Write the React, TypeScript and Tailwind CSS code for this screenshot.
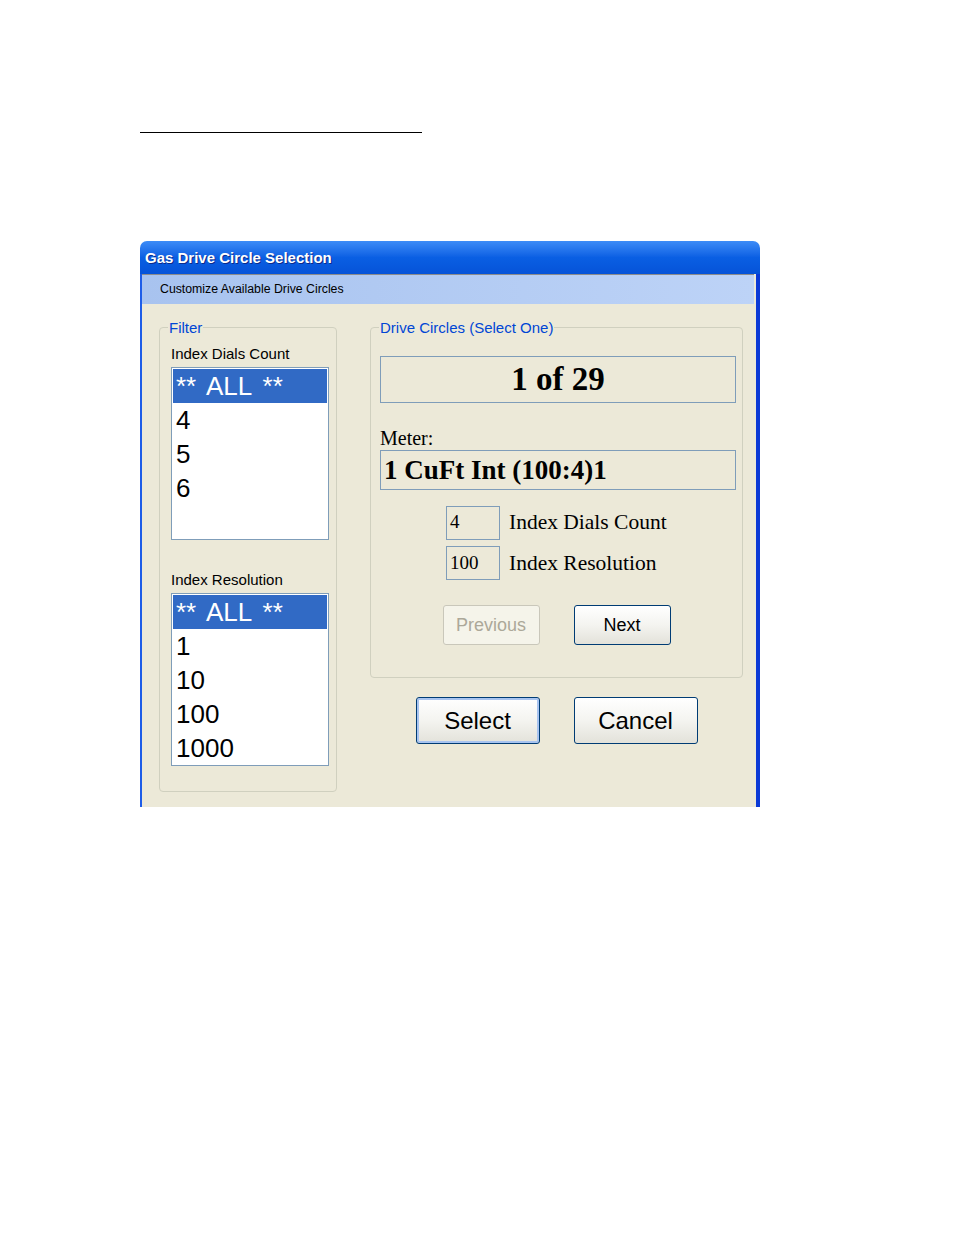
import React from "react";

const sans = "font-['Liberation_Sans',Arial,sans-serif]";
const serif = "font-['Liberation_Serif','Times_New_Roman',serif]";

type ListProps = {
  items: string[];
  selected: number;
};

function ListBox({ items, selected }: ListProps) {
  return (
    <div className="mt-[4px] h-[173px] w-[158px] border border-[#7f9db9] bg-white p-px">
      {items.map((item, i) => (
        <div
          key={item}
          className={`flex h-[34px] items-center px-[3px] text-[26px] leading-none ${
            i === selected ? "bg-[#316ac5] text-white [word-spacing:4px]" : "text-black"
          }`}
        >
          {item}
        </div>
      ))}
    </div>
  );
}

function GroupBox({
  title,
  className,
  children,
}: {
  title: string;
  className: string;
  children: React.ReactNode;
}) {
  return (
    <div className={`relative rounded-[4px] border border-[#d0d0bf] ${className}`}>
      <span className="absolute -top-[9px] left-[8px] bg-[#ece9d8] px-[1px] text-[15px] leading-[18px] text-[#0046d5]">
        {title}
      </span>
      {children}
    </div>
  );
}

function XpButton({
  label,
  className,
  disabled,
  isDefault,
}: {
  label: string;
  className: string;
  disabled?: boolean;
  isDefault?: boolean;
}) {
  if (disabled) {
    return (
      <button
        disabled
        className={`rounded-[3px] border border-[#c9c7ba] bg-[#f5f4ea] text-[#aca899] ${className}`}
      >
        {label}
      </button>
    );
  }
  return (
    <button
      className={`rounded-[3px] border border-[#003c74] bg-gradient-to-b from-[#ffffff] via-[#f4f4f0] to-[#e3e2da] text-black ${
        isDefault ? "shadow-[inset_0_0_0_2px_#a8c4f0]" : ""
      } ${className}`}
    >
      {label}
    </button>
  );
}

export default function App() {
  return (
    <div className={`h-[1235px] w-[954px] bg-white pl-[140px] pt-[132px] ${sans}`}>
      <div className="h-px w-[282px] bg-black" />

      <div className="mt-[108px] flex h-[566px] w-[620px] flex-col">
        {/* title bar */}
        <div className="flex h-[33px] items-center rounded-t-[7px] bg-gradient-to-b from-[#3d8cf7] via-[#0a5fe3] to-[#0653d8] pl-[5px] pt-px">
          <span className="text-[15px] font-bold text-white [text-shadow:1px_1px_0_#0c2a8a]">
            Gas Drive Circle Selection
          </span>
        </div>

        <div className="flex flex-1 flex-col border-l-2 border-r-4 border-l-[#1e5de8] border-r-[#0b3ad6] bg-[#ece9d8]">
          {/* header band */}
          <div className="mr-[2px] flex h-[30px] items-center border-t border-[#8c8c8c] bg-gradient-to-r from-[#a8c3ef] to-[#bdd3f7] pl-[18px]">
            <span className="text-[12.3px] text-black">Customize Available Drive Circles</span>
          </div>

          <div className="flex gap-[33px] pl-[17px] pt-[23px]">
            <GroupBox title="Filter" className="h-[465px] w-[178px] pl-[11px] pt-[17px]">
              <div className="text-[15px] leading-[18px] text-black">Index Dials Count</div>
              <ListBox items={["** ALL **", "4", "5", "6"]} selected={0} />
              <div className="mt-[31px] text-[15px] leading-[18px] text-black">Index Resolution</div>
              <ListBox items={["** ALL **", "1", "10", "100", "1000"]} selected={0} />
            </GroupBox>

            <div className="flex flex-col">
              <GroupBox title="Drive Circles (Select One)" className="h-[351px] w-[373px] pt-[28px]">
                <div className="ml-[9px] flex h-[47px] w-[356px] items-center justify-center border border-[#7f9db9]">
                  <span className={`${serif} text-[33px] font-bold leading-none`}>1 of 29</span>
                </div>

                <div className={`${serif} ml-[9px] mt-[25px] text-[20px] leading-[20px]`}>Meter:</div>
                <div className="ml-[9px] mt-[2px] flex h-[40px] w-[356px] items-center border border-[#7f9db9] pl-[3px]">
                  <span className={`${serif} text-[27px] font-bold leading-none`}>1 CuFt Int (100:4)1</span>
                </div>

                <div className="mt-[16px] flex flex-col gap-[6px] pl-[75px]">
                  <div className="flex h-[34px] items-center gap-[9px]">
                    <div className={`${serif} flex h-[34px] w-[54px] items-center border border-[#7f9db9] pb-[2px] pl-[3px] text-[19px] leading-[22px]`}>
                      4
                    </div>
                    <span className={`${serif} pb-[3px] text-[21.5px] leading-[24px]`}>Index Dials Count</span>
                  </div>
                  <div className="flex h-[34px] items-center gap-[9px]">
                    <div className={`${serif} flex h-[34px] w-[54px] items-center border border-[#7f9db9] pl-[3px] text-[19px] leading-[22px]`}>
                      100
                    </div>
                    <span className={`${serif} text-[21.5px] leading-[24px]`}>Index Resolution</span>
                  </div>
                </div>

                <div className="mt-[25px] flex justify-center gap-[34px]">
                  <XpButton label="Previous" disabled className="h-[40px] w-[97px] text-[18px]" />
                  <XpButton label="Next" className="h-[40px] w-[97px] text-[18px]" />
                </div>
              </GroupBox>

              <div className="mt-[19px] flex justify-center gap-[34px]">
                <XpButton label="Select" isDefault className="h-[47px] w-[124px] text-[24px]" />
                <XpButton label="Cancel" className="h-[47px] w-[124px] text-[24px]" />
              </div>
            </div>
          </div>
        </div>
      </div>
    </div>
  );
}
